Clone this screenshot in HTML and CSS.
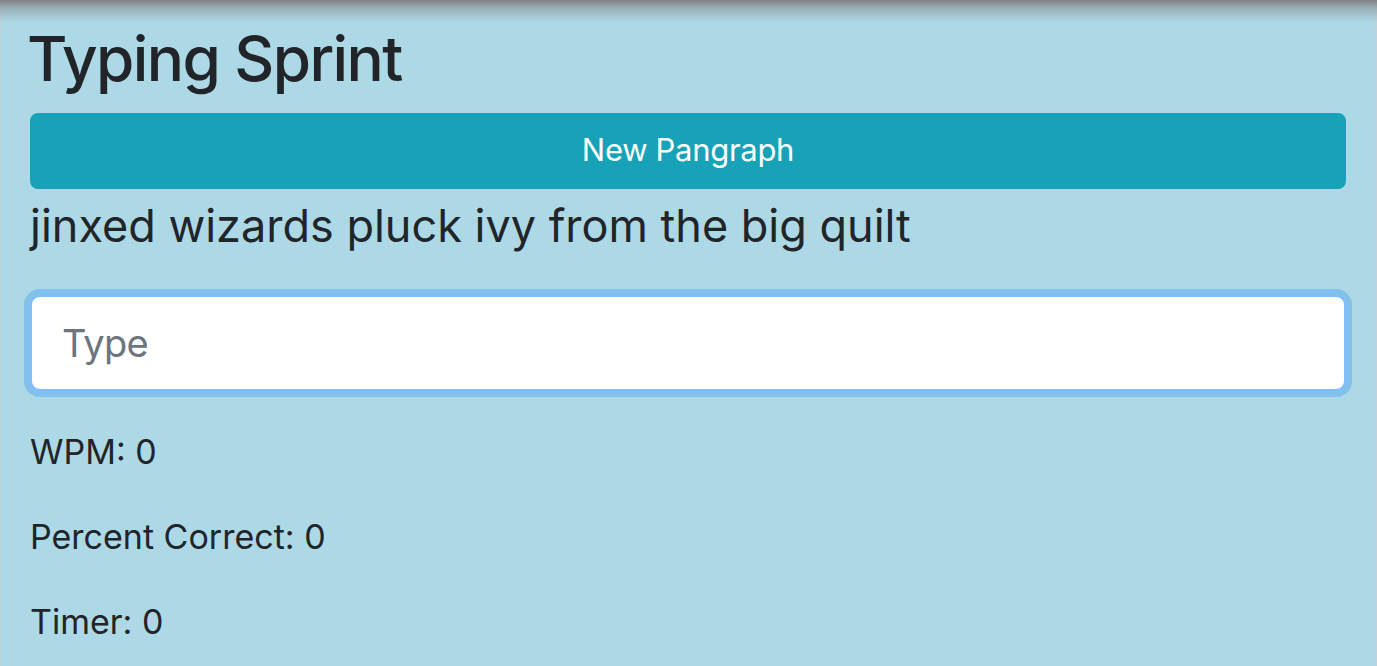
FILE: index.html
```html
<!DOCTYPE html>
<html lang="en">
<head>
<meta charset="utf-8">
<title>Typing Sprint</title>
<link rel="stylesheet" href="styles.css">
</head>
<body>
<div class="top-shadow"></div>
<main class="container">
  <h1 class="title">Typing Sprint</h1>
  <button class="btn-info" type="button">New Pangraph</button>
  <h4 class="pangram">jinxed wizards pluck ivy from the big quilt</h4>
  <input class="type-input" type="text" placeholder="Type">
  <p class="stat">WPM: 0</p>
  <p class="stat">Percent Correct: 0</p>
  <p class="stat">Timer: 0</p>
</main>
</body>
</html>
```

FILE: styles.css
```css
html, body {
  margin: 0;
  padding: 0;
}
body {
  background: #add8e6;
  font-family: Inter, "Noto Sans", sans-serif;
  color: #212529;
  height: 666px;
  overflow: hidden;
  box-sizing: border-box;
  border-left: 1px solid #bcd3da;
  border-right: 2px solid #bcd3da;
}
.top-shadow {
  position: fixed;
  top: 0;
  left: 0;
  right: 0;
  height: 22px;
  background: linear-gradient(to bottom, rgba(125,125,125,0.95) 0%, rgba(140,150,155,0.6) 40%, rgba(173,216,230,0) 100%);
  pointer-events: none;
}
.container {
  display: flex;
  flex-direction: column;
  padding: 20px 29px 0 29px;
}
.title {
  margin: 0 0 16px;
  font-size: 62px;
  font-weight: 500;
  line-height: 77px;
  letter-spacing: -1.6px;
  text-indent: -3px;
}
.btn-info {
  height: 76px;
  border: none;
  border-radius: 8px;
  background: #17a2b8;
  color: #fff;
  font-family: inherit;
  font-size: 31px;
  font-weight: 400;
  letter-spacing: -0.3px;
  padding: 0 0 4px;
}
.pangram {
  margin: 9px 0 0;
  font-size: 45px;
  font-weight: 400;
  line-height: 55px;
}
.type-input {
  margin: 42px 0 34px;
  height: 96px;
  box-sizing: border-box;
  border: 2px solid #80bdff;
  border-radius: 10px;
  box-shadow: 0 0 0 6px rgba(0,123,255,0.25);
  background: #fff;
  padding: 0 30px;
  font-family: inherit;
  font-size: 38px;
  letter-spacing: -0.8px;
  color: #495057;
  outline: none;
}
.type-input::placeholder {
  color: #6c757d;
}
.stat {
  margin: 0 0 31px;
  font-size: 34px;
  line-height: 54px;
}
```
